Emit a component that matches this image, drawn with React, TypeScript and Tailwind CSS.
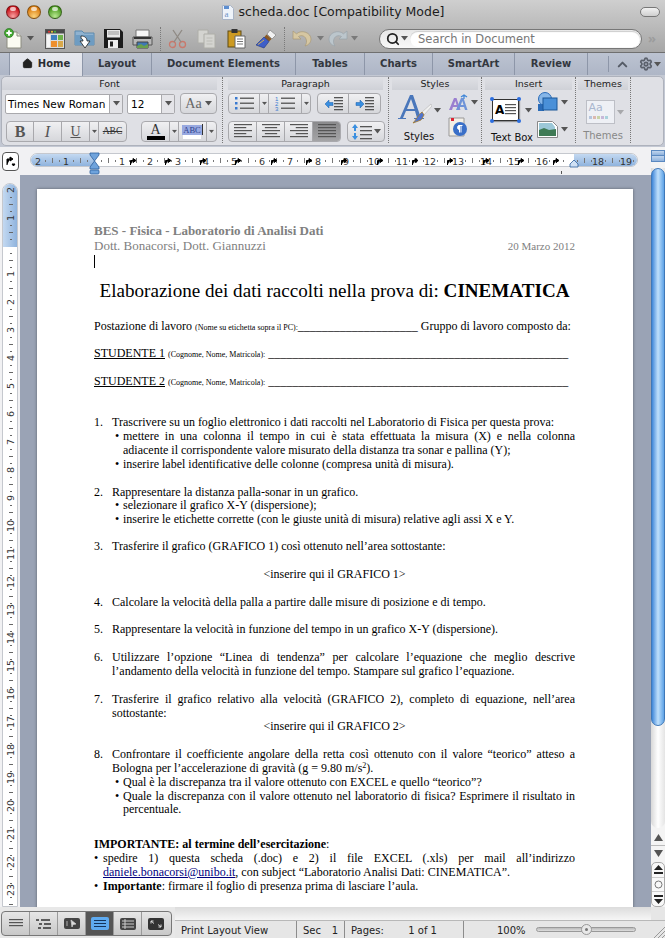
import React from "react";
import { ChevronUp, Home, Settings, Search } from "lucide-react";

const serif = "font-['Liberation_Serif','Times_New_Roman',serif]";
const ui = "font-['DejaVu_Sans','Noto_Sans',sans-serif]";

/* ---------- small shared drawings ---------- */

function Caret({ className = "" }: { className?: string }) {
  return (
    <svg width="7" height="5" viewBox="0 0 7 5" className={className}>
      <path d="M0 0h7L3.500 4.500z" fill="#555" />
    </svg>
  );
}

function TrafficLight({ from, to }: { from: string; to: string }) {
  return (
    <span
      className="relative block w-[14px] h-[14px] rounded-full border border-[#00000066]"
      style={{ background: `radial-gradient(circle at 50% 85%, ${to}, ${from} 70%)` }}
    >
      <span className="absolute left-[3px] top-[1px] w-[6px] h-[4px] rounded-full bg-white/70" />
    </span>
  );
}

function Lines({ rows, w = 18, indent = "left" }: { rows: number; w?: number; indent?: "left" | "center" | "right" | "full" }) {
  const out = [];
  for (let i = 0; i < rows; i++) {
    const short = i % 2 === 1;
    const lw = indent === "full" || !short ? w : w * 0.68;
    const x = indent === "center" ? (w - lw) / 2 : indent === "right" ? w - lw : 0;
    out.push(<rect key={i} x={x} y={i * 3} width={lw} height="1.200" fill="#555" />);
  }
  return (
    <svg width={w} height={rows * 3}>
      {out}
    </svg>
  );
}

/* ---------- toolbar icons ---------- */

const NewDoc = () => (
  <svg width="18" height="21" viewBox="0 0 18 21">
    <path d="M3 4h10l4 4v12H3z" fill="#fbfbf2" stroke="#8c8c80" />
    <path d="M13 4v4h4" fill="#e4e4d8" stroke="#8c8c80" />
    <circle cx="5" cy="5" r="4.500" fill="#45a832" stroke="#1d6b15" strokeWidth=".6" />
    <path d="M2.300 5h5.400M5 2.300v5.400" stroke="#fff" strokeWidth="1.900" />
  </svg>
);
const Gallery = () => (
  <svg width="20" height="20" viewBox="0 0 20 20">
    <rect x="0.500" y="0.500" width="19" height="19" fill="#dcdcdc" stroke="#555" />
    <rect x="1" y="1" width="18" height="3.500" fill="#4a4a4a" />
    <circle cx="4" cy="2.800" r="1" fill="#e33" />
    <circle cx="7" cy="2.800" r="1" fill="#ec3" />
    <circle cx="10" cy="2.800" r="1" fill="#4b4" />
    <rect x="2" y="6" width="3" height="12" fill="#f5f5f5" />
    <rect x="6" y="6" width="6" height="5" fill="#3f7fc0" />
    <rect x="13" y="6" width="5" height="5" fill="#6fb24a" />
    <rect x="6" y="12" width="6" height="6" fill="#ee8f2e" />
    <rect x="13" y="12" width="5" height="6" fill="#d9a84a" />
  </svg>
);
const OpenFolder = () => (
  <svg width="21" height="20" viewBox="0 0 21 20">
    <path d="M1 2h7l2 2h10v12H1z" fill="#8fb2d0" stroke="#5c8aae" />
    <path d="M1 6h19v10H1z" fill="#6e9cc2" />
    <path d="M7 7c4 0 6 2 6 5h3l-5 7-5-7h3c0-1.500-1-2.500-2-2.500z" fill="#fff" stroke="#222" strokeWidth=".8" />
  </svg>
);
const Save = () => (
  <svg width="19" height="19" viewBox="0 0 19 19">
    <path d="M0 0h16l3 3v16H0z" fill="#1c1c1c" />
    <rect x="3" y="1" width="13" height="7.500" fill="#e8e8e8" />
    <path d="M4 3h11M4 5h11" stroke="#999" />
    <rect x="4" y="11" width="10" height="8" fill="#eee" />
    <rect x="6" y="12.500" width="3" height="5" fill="#222" />
  </svg>
);
const Printer = () => (
  <svg width="21" height="20" viewBox="0 0 21 20">
    <path d="M4 1h13v7H4z" fill="#f6f6f6" stroke="#777" />
    <path d="M1 8h19v8H1z" fill="#b8b8b8" stroke="#555" />
    <path d="M2 8h17v2H2z" fill="#333" />
    <path d="M5 13h11v6H5z" fill="#3f78b5" stroke="#444" />
    <path d="M5 17l4-2 3 2 4-2v4H5z" fill="#6aa04d" />
  </svg>
);
const Cut = () => (
  <svg width="19" height="20" viewBox="0 0 19 20" fill="none" stroke="#8f8a84" strokeWidth="1.300">
    <circle cx="4.500" cy="15.500" r="3" stroke="#c9796c" />
    <circle cx="14.500" cy="15.500" r="3" stroke="#c9796c" />
    <path d="M6 13 14 1M13 13 5 1" />
  </svg>
);
const Copy = () => (
  <svg width="20" height="20" viewBox="0 0 20 20" fill="#d4d4d0" stroke="#aeaea8">
    <path d="M1 1h10v13H1z" />
    <path d="M7 5h11v14H7z" />
    <path d="M9.500 9h6M9.500 12h6M9.500 15h6" stroke="#bcbcb6" />
  </svg>
);
const Paste = () => (
  <svg width="19" height="21" viewBox="0 0 19 21">
    <rect x="1" y="3" width="13" height="16" fill="#cc9a22" stroke="#5f4a12" />
    <rect x="4.500" y="1" width="6" height="4" fill="#333" />
    <path d="M8 8h10v12H8z" fill="#fff" stroke="#666" />
    <path d="M10 11h6M10 13.500h6M10 16h6" stroke="#777" />
  </svg>
);
const Painter = () => (
  <svg width="21" height="20" viewBox="0 0 21 20">
    <path d="M14 1l6 5-4 4-5-5z" fill="#f2f2f2" stroke="#999" />
    <path d="M10.500 5.500l5 4.500-2.500 2.500-5-4z" fill="#8a5a24" />
    <path d="M8 8l5 4.500-5 6.500-8-3z" fill="#3f5fc8" stroke="#24367c" strokeWidth=".6" />
    <path d="M2 15.500 8 11" stroke="#d9b24a" />
  </svg>
);
const Undo = () => (
  <svg width="20" height="17" viewBox="0 0 20 17">
    <path d="M1 1v8h8L6.500 6.500C9 4.800 14 5.500 14.500 11c.1 2-.5 3.500-1.500 5 4-1 6-4 6-7C19 3 10-1 4.500 3.800z" fill="#d6c7a2" stroke="#a99a76" strokeWidth=".7" />
  </svg>
);
const Redo = () => (
  <svg width="20" height="17" viewBox="0 0 20 17">
    <path d="M19 1v8h-8l2.500-2.500C11 4.800 6 5.500 5.500 11c-.1 2 .5 3.500 1.500 5-4-1-6-4-6-7C1 3 10-1 15.500 3.800z" fill="#bcc6cc" stroke="#9aa4aa" strokeWidth=".7" />
  </svg>
);

const Dotted = () => <span className="h-[66px] shrink-0 border-l border-dotted border-[#777]" />;

/* ---------- title bar & toolbar ---------- */

function TitleBar() {
  return (
    <div className="h-[25px] flex items-center pl-[6px] pr-[6px] relative">
      <div className="flex gap-[7px] mt-[-2px]">
        <TrafficLight from="#c8141c" to="#f9a0a0" />
        <TrafficLight from="#dc7d10" to="#fbd27a" />
        <TrafficLight from="#4c9a20" to="#b8e890" />
      </div>
      <div className={`flex-1 flex justify-center items-center gap-[5px] ml-[-36px] ${ui} text-[12.500px] text-[#1c1c1c]`}>
        <svg width="12" height="15" viewBox="0 0 12 15">
          <path d="M.5.500h8l3 3v11H.500z" fill="#eef3fa" stroke="#a9b4c6" />
          <rect x="2" y="1" width="5" height="3" fill="#5d8ed0" />
          <text x="2.500" y="12" fontSize="9" fill="#6f92c6" fontFamily="Liberation Serif">a</text>
        </svg>
        <span>scheda.doc [Compatibility Mode]</span>
      </div>
      <span className="w-[20px] h-[10px] rounded-full border border-[#777] bg-gradient-to-b from-[#f2f2f2] to-[#cfcfcf] mt-[-2px] mr-[-1px]" />
    </div>
  );
}

function Toolbar() {
  return (
    <div className="h-[28px] flex items-center pl-[4px] border-b border-[#6f6f6f]">
      <NewDoc />
      <Caret className="ml-[5px] mr-[11px]" />
      <Gallery />
      <span className="w-[9px]" />
      <OpenFolder />
      <span className="w-[9px]" />
      <Save />
      <span className="w-[9px]" />
      <Printer />
      <span className="mx-[7px] h-[24px] border-l border-dotted border-[#7a7a7a]" />
      <Cut />
      <span className="w-[10px]" />
      <Copy />
      <span className="w-[10px]" />
      <Paste />
      <span className="w-[10px]" />
      <Painter />
      <span className="mx-[7px] h-[24px] border-l border-dotted border-[#7a7a7a]" />
      <Undo />
      <Caret className="ml-[5px] mr-[4px] opacity-60" />
      <Redo />
      <Caret className="ml-[3px] opacity-60" />
      <div className="ml-[21px] w-[263px] h-[20px] rounded-full bg-gradient-to-b from-[#e8e8e8] to-[#f8f8f8] border border-[#777] flex items-center pl-[6px] pr-[1px]">
        <Search size={14} strokeWidth={3} className="text-[#222]" />
        <Caret className="ml-[1px]" />
        <div className={`ml-[2px] flex-1 h-[16px] rounded-full bg-white shadow-[inset_0_1px_1px_#0003] pl-[8px] ${ui} text-[11.500px] leading-[16px] text-[#777]`}>
          Search in Document
        </div>
      </div>
      <span className="ml-[6px] text-[#9c9c9c] text-[13px] font-bold leading-none">»</span>
    </div>
  );
}

/* ---------- ribbon tabs ---------- */

function Tabs() {
  const tabs: [string, string][] = [
    ["Layout", "w-[69px]"],
    ["Document Elements", "w-[144px]"],
    ["Tables", "w-[69px]"],
    ["Charts", "w-[68px]"],
    ["SmartArt", "w-[82px]"],
    ["Review", "w-[73px]"],
  ];
  return (
    <div className={`h-[22px] flex bg-gradient-to-b from-[#bcc3d1] to-[#aeb6c6] ${ui} text-[10px] font-bold text-[#33373e]`}>
      <div className="w-[10px] border-r border-[#8d96a8]" />
      <div className="w-[73px] h-[23px] pb-[3px] flex items-center justify-center gap-[5px] bg-gradient-to-b from-[#e6e8ee] to-[#dddfe6] border-r border-[#8d96a8] text-[#2a2d33] relative z-10">
        <Home size={11} fill="#222" stroke="#222" />
        <span>Home</span>
      </div>
      {tabs.map(([label, w]) => (
        <div key={label} className={`${w} pb-[2px] flex items-center justify-center border-r border-[#8d96a8]`}>
          {label}
        </div>
      ))}
      <span className="ml-[20px] my-[3px] border-l border-[#8d96a8]" />
      <div className="flex items-center ml-[6px] gap-[9px]">
        <ChevronUp size={15} strokeWidth={3.200} className="text-[#555b66]" />
        <div className="flex items-center gap-[1px]">
          <Settings size={14} strokeWidth={3} className="text-[#5b616c]" />
          <Caret />
        </div>
      </div>
    </div>
  );
}

/* ---------- ribbon ---------- */

function Btn({ w, active = false, children, last = false }: { w: string; active?: boolean; children?: React.ReactNode; last?: boolean }) {
  return (
    <div
      className={`${w} h-full flex items-center justify-center ${last ? "" : "border-r border-[#a8a8ac]"} ${
        active ? "bg-gradient-to-b from-[#8a8a8c] to-[#a4a4a6]" : ""
      }`}
    >
      {children}
    </div>
  );
}

const segment = "flex items-center h-[21px] border border-[#a9a9ad] rounded-[4px] bg-gradient-to-b from-[#f0f0f2] to-[#d6d7db] overflow-hidden";

function GroupTitle({ label, w, className = "" }: { label: string; w: string; className?: string }) {
  return (
    <div className={`${w} h-[13px] text-center ${ui} text-[9.500px] leading-[14px] text-[#222] bg-gradient-to-b from-transparent to-[#cfd1d7] ${className}`}>
      {label}
    </div>
  );
}

function BulletList({ numbered = false }: { numbered?: boolean }) {
  return (
    <svg width="20" height="15" viewBox="0 0 20 15">
      {[1, 6, 11].map((y, i) =>
        numbered ? (
          <text key={y} x="0" y={y + 4} fontSize="6" fill="#3a7ad0" fontFamily="Liberation Sans">{i + 1}</text>
        ) : (
          <rect key={y} x="1" y={y} width="2.500" height="2.500" fill="#3a7ad0" />
        ),
      )}
      {[1.500, 6.500, 11.500].map((y) => (
        <rect key={y} x="6" y={y} width="14" height="1.500" fill="#666" />
      ))}
    </svg>
  );
}

function IndentIcon({ flip = false }: { flip?: boolean }) {
  return (
    <svg width="19" height="14" viewBox="0 0 19 14">
      {flip ? (
        <path d="M5 3 1 7l4 4V8.500h4v-3H5z" fill="#3a8fe0" stroke="#1b5faa" strokeWidth=".5" />
      ) : (
        <path d="M5 3l4 4-4 4V8.500H1v-3h4z" fill="#3a8fe0" stroke="#1b5faa" strokeWidth=".5" />
      )}
      {[0, 3, 6, 9, 12].map((y) => (
        <rect key={y} x="10" y={y} width="9" height="1.300" fill="#555" />
      ))}
    </svg>
  );
}

function FontGroup() {
  return (
    <div className="w-[220px] shrink-0 flex flex-col">
      <GroupTitle label="Font" w="w-[215px]" />
      <div className="w-full flex items-center mt-[3px] pl-[3px]">
        <div className={`w-[118px] h-[20px] flex border border-[#a9a9ad] rounded-[2px] bg-white ${ui}`}>
          <span className="flex-1 px-[2px] text-[10.500px] leading-[18px] text-black whitespace-nowrap overflow-hidden">Times New Roman</span>
          <span className="w-[13px] flex items-center justify-center border-l border-[#a9a9ad] bg-[#e4e4e8]"><Caret /></span>
        </div>
        <div className={`ml-[4px] w-[48px] h-[20px] flex border border-[#a9a9ad] rounded-[2px] bg-white ${ui}`}>
          <span className="flex-1 px-[3px] text-[10.500px] leading-[18px] text-black">12</span>
          <span className="w-[13px] flex items-center justify-center border-l border-[#a9a9ad] bg-[#e4e4e8]"><Caret /></span>
        </div>
        <div className={`${segment} ml-[5px] w-[37px] justify-center gap-[3px]`}>
          <span className={`${serif} text-[14px] leading-none text-[#666]`}>Aa</span>
          <Caret />
        </div>
      </div>
      <div className="w-full flex items-center mt-[7px] pl-[4px]">
        <div className={`${segment} w-[121px]`}>
          <Btn w="w-[27px]"><span className={`${serif} font-bold text-[16px] text-[#555]`}>B</span></Btn>
          <Btn w="w-[28px]"><span className={`${serif} italic text-[16px] text-[#555]`}>I</span></Btn>
          <Btn w="w-[28px]"><span className={`${serif} underline text-[14px] text-[#555]`}>U</span></Btn>
          <Btn w="w-[9px]"><Caret className="scale-75" /></Btn>
          <Btn w="flex-1" last><span className={`${serif} line-through text-[9.500px] text-[#333]`}>ABC</span></Btn>
        </div>
        <div className={`${segment} ml-[14px] w-[76px]`}>
          <Btn w="w-[28px]">
            <div className="flex flex-col items-center">
              <span className={`${serif} text-[14px] leading-[12px] text-[#333]`}>A</span>
              <span className="w-[18px] h-[4px] bg-black" />
            </div>
          </Btn>
          <Btn w="w-[9px]"><Caret className="scale-75" /></Btn>
          <Btn w="w-[28px]">
            <div className="flex flex-col items-center">
              <div className="flex items-center">
                <span className={`${serif} text-[8.500px] leading-[10px] px-[1px] bg-[#97a8e0] text-[#2e3f8c]`}>ABC</span>
                <span className="w-px h-[11px] bg-[#333]" />
              </div>
              <span className="w-[18px] h-[4px] bg-white" />
            </div>
          </Btn>
          <Btn w="flex-1" last><Caret className="scale-75" /></Btn>
        </div>
      </div>
    </div>
  );
}

function ParagraphGroup() {
  return (
    <div className="w-[165px] shrink-0 flex flex-col items-center">
      <GroupTitle label="Paragraph" w="w-[155px]" />
      <div className="w-full flex items-center mt-[3px] pl-[5px] gap-[6px]">
        <div className={`${segment} w-[83px]`}>
          <Btn w="w-[31px]"><BulletList /></Btn>
          <Btn w="w-[9px]"><Caret className="scale-75" /></Btn>
          <Btn w="w-[33px]"><BulletList numbered /></Btn>
          <Btn w="flex-1" last><Caret className="scale-75" /></Btn>
        </div>
        <div className={`${segment} w-[64px]`}>
          <Btn w="w-[31px]"><IndentIcon flip /></Btn>
          <Btn w="flex-1" last><IndentIcon /></Btn>
        </div>
      </div>
      <div className="w-full flex items-center mt-[7px] pl-[5px] gap-[6px]">
        <div className={`${segment} w-[113px]`}>
          <Btn w="w-[28px]"><Lines rows={5} indent="left" /></Btn>
          <Btn w="w-[28px]"><Lines rows={5} indent="center" /></Btn>
          <Btn w="w-[28px]"><Lines rows={5} indent="right" /></Btn>
          <Btn w="flex-1" active last><Lines rows={5} indent="full" /></Btn>
        </div>
        <div className={`${segment} w-[38px] justify-center gap-[2px]`}>
          <svg width="20" height="16" viewBox="0 0 20 16">
            <path d="M3 0l3 4H4v3H2V4H0zM3 16l3-4H4V9H2v3H0z" fill="#3a8fe0" />
            {[2, 6, 10, 14].map((y) => <rect key={y} x="8" y={y} width="12" height="1.300" fill="#555" />)}
          </svg>
          <Caret />
        </div>
      </div>
    </div>
  );
}

function StylesGroup() {
  return (
    <div className="w-[92px] shrink-0 flex flex-col items-center">
      <GroupTitle label="Styles" w="w-[86px]" />
      <div className="flex w-full pl-[6px] mt-[1px]">
        <div className="flex flex-col items-center w-[48px]">
          <div className="flex items-center h-[38px]">
            <svg width="34" height="32" viewBox="0 0 34 32">
              <path d="M12 1h3l8 23h3v1H16v-1h3l-2-7H8l-3 7h3v1H0v-1h2z M9 15h7.500L13 5z" fill="#4a77bb" fillRule="evenodd" />
              <path d="M33 10l-9 8 2 3 8-9z" fill="#f0f0f0" stroke="#aaa" strokeWidth=".5" />
              <path d="M24 18l2 3-3 5-8 3c3-3 5-8 9-11z" fill="#4e74d0" stroke="#a47a2c" strokeWidth=".8" />
            </svg>
            <Caret className="ml-[2px]" />
          </div>
          <span className={`${ui} text-[10px] leading-[12px] text-[#111] mt-[2px]`}>Styles</span>
        </div>
        <div className="flex flex-col gap-[6px] ml-[5px] mt-[3px]">
          <div className="flex items-center gap-[2px]">
            <svg width="21" height="17" viewBox="0 0 21 17">
              <path d="M1 16 6 4h2.500l4 12h-2.500l-1-3H5l-1 3zM5.800 11h2.800L7.300 7z" fill="#9a7fd0" fillRule="evenodd" />
              <path d="M8 16 13 4h2.500l4 12H17l-1-3h-4l-1 3zM12.800 11h2.800l-1.300-4z" fill="#6f93d8" fillRule="evenodd" />
              <path d="M13 3l3-2 3 2M16 1v4" stroke="#3f86d8" strokeWidth="1.200" fill="none" />
            </svg>
            <Caret />
          </div>
          <svg width="20" height="20" viewBox="0 0 20 20">
            <path d="M1 1h15v18H1z" fill="#f3efe6" stroke="#999" />
            <rect x="3" y="1" width="3" height="3" fill="#d23" />
            <circle cx="12" cy="12" r="7" fill="#3a6fc8" />
            <path d="M10.500 8.500h4M13 8.500v7M11.500 8.500v7M11.500 8.500a2 2 0 0 0 0 4" stroke="#fff" fill="#fff" strokeWidth="1" />
          </svg>
        </div>
      </div>
    </div>
  );
}

function InsertGroup() {
  return (
    <div className="w-[93px] shrink-0 flex flex-col items-center">
      <GroupTitle label="Insert" w="w-[87px]" />
      <div className="flex w-full pl-[7px] mt-[1px]">
        <div className="flex flex-col items-center w-[46px]">
          <div className="flex items-center h-[38px]">
            <div className="relative w-[27px] h-[22px] bg-white border border-[#333] shadow-[1px_1px_1px_#0005] flex items-center pl-[2px] gap-[1px]">
              <span className={`${ui} text-[12px] font-bold leading-none text-black`}>A</span>
              <Lines rows={4} w={11} indent="full" />
              {/* selection handles of the text box */}
              <span className="absolute left-[-3px] top-[-3px] w-[4px] h-[4px] rounded-full bg-[#2b6de0]" />
              <span className="absolute right-[-3px] top-[-3px] w-[4px] h-[4px] rounded-full bg-[#2b6de0]" />
              <span className="absolute left-[-3px] bottom-[-3px] w-[4px] h-[4px] rounded-full bg-[#2b6de0]" />
              <span className="absolute right-[-3px] bottom-[-3px] w-[4px] h-[4px] rounded-full bg-[#2b6de0]" />
            </div>
            <Caret className="ml-[6px]" />
          </div>
          <span className={`${ui} text-[10px] leading-[12px] text-[#111] whitespace-nowrap mt-[3px]`}>Text Box</span>
        </div>
        <div className="flex flex-col gap-[9px] ml-[2px] mt-[1px]">
          <div className="flex items-center gap-[3px]">
            <svg width="21" height="20" viewBox="0 0 21 20">
              <circle cx="8" cy="7" r="6.500" fill="#86b6e8" stroke="#2b6cb8" />
              <rect x="1" y="12" width="6" height="7" fill="#2b6cb8" />
              <rect x="6" y="6" width="14" height="12" fill="#4a90d8" stroke="#1b5698" />
            </svg>
            <Caret />
          </div>
          <div className="flex items-center gap-[3px]">
            <svg width="21" height="17" viewBox="0 0 21 17">
              <path d="M.5.500h15l5 5v11H.500z" fill="#fff" stroke="#888" />
              <path d="M2 2h13l3 4v3H2z" fill="#9cc8d8" />
              <path d="M2 9l5-2 5 2 7-1v7H2z" fill="#3f7a55" />
            </svg>
            <Caret />
          </div>
        </div>
      </div>
    </div>
  );
}

function ThemesGroup() {
  return (
    <div className="w-[54px] shrink-0 flex flex-col items-center">
      <GroupTitle label="Themes" w="w-[50px]" />
      <div className="flex flex-col items-center mt-[3px]">
        <div className="flex items-center gap-[2px] h-[32px] mt-[3px] ml-[3px]">
          <div className={`w-[29px] h-[24px] bg-[#eef0f5] border border-[#bdbfc6] ${ui} text-[11px] leading-[14px] text-[#a9b7cf] pl-[2px]`}>
            Aa
            <div className="flex gap-[1px] mt-[1px]">
              <span className="w-[3px] h-[3px] bg-[#b7c6de]" />
              <span className="w-[3px] h-[3px] bg-[#dcb9b0]" />
              <span className="w-[3px] h-[3px] bg-[#c9d4a8]" />
              <span className="w-[3px] h-[3px] bg-[#c7b8d8]" />
              <span className="w-[3px] h-[3px] bg-[#a9d2dc]" />
            </div>
          </div>
          <Caret className="opacity-40" />
        </div>
        <span className={`${ui} text-[10px] leading-[12px] text-[#888] mt-[2px]`}>Themes</span>
      </div>
    </div>
  );
}

function Ribbon() {
  return (
    <div className="h-[72px] bg-[#c3c8d3] px-[1px] pt-[1px] pb-[1px]">
      <div className="h-full flex rounded-[5px] border border-[#aeb2bc] bg-[#dfe0e5] overflow-hidden">
        <FontGroup />
        <Dotted />
        <ParagraphGroup />
        <Dotted />
        <StylesGroup />
        <Dotted />
        <InsertGroup />
        <Dotted />
        <ThemesGroup />
        <Dotted />
      </div>
    </div>
  );
}

/* ---------- rulers ---------- */

function HorizontalRuler() {
  const ticks: React.ReactNode[] = [];
  const inch = 28;
  const zero = 63;
  const labelled = [-2, -1, 1, 2, 3, 4, 5, 6, 7, 8, 9, 10, 11, 12, 13, 14, 15, 16, 18, 19];
  labelled.forEach((n) => {
    ticks.push(
      <text key={n} x={zero + n * inch} y="12.500" textAnchor="middle" fontSize="9.500" fill="#333" fontFamily="DejaVu Sans">
        {Math.abs(n)}
      </text>,
    );
  });
  for (let n = -2; n < 20; n++) {
    for (const f of [0.25, 0.5, 0.75]) {
      const x = zero + (n + f) * inch;
      ticks.push(<rect key={`${n}-${f}`} x={x} y={f === 0.5 ? 6 : 8} width="1" height={f === 0.5 ? 5 : 2} fill="#777" />);
    }
  }
  // tab stops set on the document
  for (let i = 0; i < 13; i++) {
    const x = Math.round(98.500 + i * 35.330);
    ticks.push(<path key={`t${i}`} d={`M${x + 0.500} 13V8.500H${x + 3}M${x + 3} 6.500l3 2-3 2z`} stroke="#000" fill="#000" strokeWidth="1" />);
  }
  return (
    <div className="h-[28px] bg-[#f1f1f3] flex items-start pt-[6px] pl-[2px]">
      <div className="w-[17px] h-[19px] rounded-[4px] border border-[#555] bg-white flex items-center justify-center mt-[-1px] shadow-[0_0_2px_#fff]">
        <svg width="11" height="11" viewBox="0 0 11 11">
          <path d="M2 9V3h3M5 1l3 2-3 2zM7 8h3L8.500 10z" stroke="#000" fill="#000" />
        </svg>
      </div>
      <div className="ml-[11px] w-[608px] h-[14px] rounded-full bg-white border border-[#c5c8ce] relative">
        <span className="absolute left-0 top-0 bottom-0 w-[63px] rounded-l-full bg-gradient-to-b from-[#c4d9f1] to-[#8fb3dd]" />
        <span className="absolute right-0 top-0 bottom-0 w-[63px] rounded-r-full bg-gradient-to-b from-[#c4d9f1] to-[#8fb3dd]" />
        <svg width="608" height="18" className="absolute left-0 top-[-2px]">
          {ticks}
        </svg>
        {/* indent markers */}
        <svg width="11" height="23" viewBox="0 0 11 23" className="absolute left-[58px] top-[-2px]">
          <path d="M1 1h9v2L5.500 9 1 3z" fill="#6fa3dc" stroke="#2f5f9c" strokeWidth=".8" />
          <path d="M5.500 9 10 15v2H1v-2z" fill="#6fa3dc" stroke="#2f5f9c" strokeWidth=".8" />
          <rect x="1" y="18" width="9" height="4" rx="1" fill="#6fa3dc" stroke="#2f5f9c" strokeWidth=".8" />
        </svg>
        <svg width="10" height="9" viewBox="0 0 10 9" className="absolute right-[58px] top-[5px]">
          <path d="M5 1l4 4v3H1V5z" fill="#cfe0f4" stroke="#2f5f9c" strokeWidth=".8" />
        </svg>
        <span className="absolute left-[530px] top-[17px] w-px h-[3px] bg-[#555]" />
      </div>
    </div>
  );
}

function VerticalRuler() {
  const step = 28;
  const nums = [2, 1, 0, 1, 2, 3, 4, 5, 6, 7, 8, 9, 10, 11, 12, 13, 14, 15, 16, 17, 18, 19, 20, 21, 22, 23];
  return (
    <div className="w-[20px] shrink-0 bg-[#f1f1f3] pl-[2px] pt-[8px] pr-[1px]">
      <div className="relative h-[724px] w-[16px] rounded-t-full bg-white border border-[#c5c8ce] overflow-hidden">
        <span className="absolute left-0 right-0 top-0 h-[63px] bg-gradient-to-r from-[#c4d9f1] to-[#8fb3dd]" />
        <svg width="16" height="724" className="absolute left-0 top-0">
          {nums.map((n, i) =>
            n === 0 ? null : (
              <text key={i} x="0" y="0" fontSize="9.500" fill="#333" fontFamily="DejaVu Sans" textAnchor="middle"
                transform={`translate(11 ${6 + i * step}) rotate(-90)`}>
                {n}
              </text>
            ),
          )}
          {Array.from({ length: 104 }).map((_, i) =>
            i % 4 === 0 ? null : (
              <rect key={i} x={i % 2 ? 7 : 6} y={6 + (i * step) / 4} width={i % 2 ? 2 : 4} height="1" fill="#666" />
            ),
          )}
        </svg>
      </div>
    </div>
  );
}

/* ---------- document body ---------- */

function JLine({ children, className = "" }: { children: React.ReactNode; className?: string }) {
  return <div className={`text-justify [text-align-last:justify] whitespace-nowrap ${className}`}>{children}</div>;
}

function Item({ n, className = "", children }: { n: number; className?: string; children: React.ReactNode }) {
  return (
    <div className={`flex ${className}`}>
      <span className="w-[18px] shrink-0">{n}.</span>
      <div className="flex-1 min-w-0">{children}</div>
    </div>
  );
}

function Bullet({ children, className = "" }: { children: React.ReactNode; className?: string }) {
  return (
    <div className={`flex ${className}`}>
      <span className="w-[11px] shrink-0 pl-[3px]">•</span>
      <div className="flex-1 min-w-0">{children}</div>
    </div>
  );
}

function Page() {
  return (
    <div className={`w-[596px] h-[760px] bg-white shadow-[0_0_3px_#0006] pl-[57px] pr-[58px] pt-[34px] ${serif} text-[12px] leading-[13.800px] text-black`}>
      <div className="font-bold text-[13px] leading-[15px] text-[#808080]">BES - Fisica - Laboratorio di Analisi Dati</div>
      <div className="flex justify-between items-baseline text-[13px] leading-[15px] text-[#808080]">
        <span>Dott. Bonacorsi, Dott. Giannuzzi</span>
        <span className="text-[11px]">20 Marzo 2012</span>
      </div>
      <div className="w-px h-[13px] bg-black mt-[1px]" />
      <div className="text-center text-[19.100px] leading-[22px] mt-[12px] whitespace-nowrap">
        Elaborazione dei dati raccolti nella prova di: <b>CINEMATICA</b>
      </div>

      <div className="mt-[18px] whitespace-nowrap">
        Postazione di lavoro <span className="text-[8px]">(Nome su etichetta sopra il PC):</span>____________________ Gruppo di lavoro composto da:
      </div>
      <div className="mt-[12px] whitespace-nowrap">
        <u>STUDENTE 1</u> <span className="text-[8px]">(Cognome, Nome, Matricola):</span> __________________________________________________
      </div>
      <div className="mt-[13px] whitespace-nowrap">
        <u>STUDENTE 2</u> <span className="text-[8px]">(Cognome, Nome, Matricola):</span> __________________________________________________
      </div>

      <Item n={1} className="mt-[27px]">
        <div className="whitespace-nowrap">Trascrivere su un foglio elettronico i dati raccolti nel Laboratorio di Fisica per questa prova:</div>
        <Bullet>
          <JLine>mettere in una colonna il tempo in cui è stata effettuata la misura (X) e nella colonna</JLine>
          <div className="whitespace-nowrap">adiacente il corrispondente valore misurato della distanza tra sonar e pallina (Y);</div>
        </Bullet>
        <Bullet>inserire label identificative delle colonne (compresa unità di misura).</Bullet>
      </Item>

      <Item n={2} className="mt-[14px]">
        <div>Rappresentare la distanza palla-sonar in un grafico.</div>
        <Bullet>selezionare il grafico X-Y (dispersione);</Bullet>
        <Bullet>inserire le etichette corrette (con le giuste unità di misura) relative agli assi X e Y.</Bullet>
      </Item>

      <Item n={3} className="mt-[13.500px]">Trasferire il grafico (GRAFICO 1) così ottenuto nell’area sottostante:</Item>
      <div className="mt-[14px] text-center">&lt;inserire qui il GRAFICO 1&gt;</div>

      <Item n={4} className="mt-[14px]">Calcolare la velocità della palla a partire dalle misure di posizione e di tempo.</Item>
      <Item n={5} className="mt-[13.500px]">Rappresentare la velocità in funzione del tempo in un grafico X-Y (dispersione).</Item>
      <Item n={6} className="mt-[14px]">
        <JLine>Utilizzare l’opzione “Linea di tendenza” per calcolare l’equazione che meglio descrive</JLine>
        <div>l’andamento della velocità in funzione del tempo. Stampare sul grafico l’equazione.</div>
      </Item>
      <Item n={7} className="mt-[14px]">
        <JLine>Trasferire il grafico relativo alla velocità (GRAFICO 2), completo di equazione, nell’area</JLine>
        <div>sottostante:</div>
      </Item>
      <div className="text-center">&lt;inserire qui il GRAFICO 2&gt;</div>
      <Item n={8} className="mt-[14px]">
        <JLine>Confrontare il coefficiente angolare della retta così ottenuto con il valore “teorico” atteso a</JLine>
        <div>
          Bologna per l’accelerazione di gravità (g = 9.80 m/s<sup className="text-[8px] leading-none">2</sup>).
        </div>
        <Bullet>Qual è la discrepanza tra il valore ottenuto con EXCEL e quello “teorico”?</Bullet>
        <Bullet>
          <JLine>Quale la discrepanza con il valore ottenuto nel laboratorio di fisica? Esprimere il risultato in</JLine>
          <div>percentuale.</div>
        </Bullet>
      </Item>

      <div className="mt-[21px]">
        <b>IMPORTANTE: al termine dell’esercitazione</b>:
      </div>
      <div className="flex">
        <span className="w-[9px] shrink-0">•</span>
        <div className="flex-1 min-w-0">
          <JLine>spedire 1) questa scheda (.doc) e 2) il file EXCEL (.xls) per mail all’indirizzo</JLine>
          <div className="whitespace-nowrap">
            <span className="text-[#000080] underline">daniele.bonacorsi@unibo.it</span>, con subject “Laboratorio Analisi Dati: CINEMATICA”.
          </div>
        </div>
      </div>
      <div className="flex">
        <span className="w-[9px] shrink-0">•</span>
        <div>
          <b>Importante</b>: firmare il foglio di presenza prima di lasciare l’aula.
        </div>
      </div>
    </div>
  );
}

function Scrollbar() {
  const glyph = "h-[16px] flex items-center justify-center";
  return (
    <div className="w-[14px] shrink-0 bg-[#f4f4f4] flex flex-col">
      {/* split box */}
      <div className="mt-[3px] h-[6px] bg-gradient-to-b from-[#c2d6ee] to-[#8fb2dc] border border-[#5b89c0]" />
      <div className="h-[6px] bg-gradient-to-b from-[#c2d6ee] to-[#8fb2dc] border border-[#5b89c0] border-t-0" />
      {/* track with its thumb */}
      <div className="mt-[6px] h-[660px] rounded-b-full bg-gradient-to-r from-[#d8d8d8] via-white to-[#e4e4e4] shrink-0">
        <div className="h-[558px] rounded-full border border-[#3f78b8] bg-gradient-to-r from-[#3d86d8] via-[#bfe0fb] to-[#5da2e6]" />
      </div>
      <div className="mt-[1px] flex flex-col items-center text-[#555]">
        <span className={glyph}>
          <svg width="9" height="7"><path d="M4.500 0 9 7H0z" fill="#555" /></svg>
        </span>
        <span className={`${glyph} w-full border-t border-[#bbb]`}>
          <svg width="9" height="7"><path d="M4.500 7 9 0H0z" fill="#555" /></svg>
        </span>
      </div>
      <div className="mt-[1px] rounded-[5px] border border-[#aaa] bg-[#f8f8f8] flex-1 flex flex-col">
        <span className="flex-1 flex items-center justify-center">
          <svg width="9" height="10"><path d="M4.500 0 9 5H0zM0 7h9v2H0z" fill="#222" /></svg>
        </span>
        <span className="flex-1 flex items-center justify-center border-y border-[#ccc]">
          <svg width="9" height="9"><circle cx="4.500" cy="4.500" r="3.500" fill="none" stroke="#777" /></svg>
        </span>
        <span className="flex-1 flex items-center justify-center">
          <svg width="9" height="10"><path d="M4.500 10 9 5H0zM0 1h9v2H0z" fill="#222" /></svg>
        </span>
      </div>
    </div>
  );
}

/* ---------- status bar ---------- */

function ViewButton({ active = false, children }: { active?: boolean; children: React.ReactNode }) {
  return (
    <div className={`w-[28px] h-full flex items-center justify-center border-r border-[#9a9a9a] last:border-r-0 ${active ? "bg-[#555]" : ""}`}>
      {children}
    </div>
  );
}

function StatusBar() {
  const Cell = ({ w, children }: { w: string; children: React.ReactNode }) => (
    <div className={`${w} h-full flex items-center border-r border-[#8c8c8c] px-[6px] pt-[2px] whitespace-nowrap`}>{children}</div>
  );
  return (
    <div className="h-[31px] flex bg-[#dedede]">
      <div className="w-[175px] shrink-0 pt-[4px] pl-[1px] bg-[#e8e8e8]">
        <div className="w-[171px] h-[25px] flex items-stretch rounded-[4px] border border-[#777] bg-gradient-to-b from-[#e6e6e6] to-[#c8c8c8] overflow-hidden">
          <ViewButton>
            <Lines rows={3} w={14} indent="full" />
          </ViewButton>
          <ViewButton>
            <svg width="16" height="10" viewBox="0 0 16 10">
              <path d="M0 1h3M5 1h9M3 5h3M8 5h7M2 9h3M7 9h8" stroke="#333" strokeWidth="1.500" />
            </svg>
          </ViewButton>
          <ViewButton>
            <svg width="16" height="11" viewBox="0 0 16 11">
              <rect width="16" height="11" rx="2" fill="#444" />
              <path d="M3 3v5M7 2l5 4-3 .5-1 2.500z" stroke="#ccc" fill="#ddd" strokeWidth=".8" />
            </svg>
          </ViewButton>
          <ViewButton active>
            <svg width="18" height="13" viewBox="0 0 18 13">
              <rect width="18" height="13" rx="2" fill="#5eaaf0" />
              <path d="M3 3.500h12M3 6.500h12M3 9.500h12" stroke="#13345c" strokeWidth="1.200" />
            </svg>
          </ViewButton>
          <ViewButton>
            <svg width="16" height="12" viewBox="0 0 16 12">
              <rect width="16" height="12" rx="2" fill="#444" />
              <path d="M2 3h12M2 6h12M2 9h12M5 1v10" stroke="#ccc" />
            </svg>
          </ViewButton>
          <ViewButton>
            <svg width="16" height="12" viewBox="0 0 16 12">
              <rect width="16" height="12" rx="2" fill="#333" />
              <path d="M3 3l3 2.500M3 3h2.500M3 3v2.500M13 9l-3-2.500M13 9h-2.500M13 9V6.500" stroke="#ddd" />
            </svg>
          </ViewButton>
        </div>
      </div>
      <div className={`flex-1 flex flex-col ${ui} text-[10px] text-[#222]`}>
        <div className="h-[15px] flex">
          <div className="w-[476px] bg-gradient-to-b from-[#dcdcdc] to-[#f6f6f6]" />
          <div className="flex-1 bg-[#e6e6e6]" />
        </div>
        <div className="flex-1 flex items-center bg-[#e6e6e6] border-t border-[#b8b8b8]">
          <Cell w="w-[122px]">Print Layout View</Cell>
          <Cell w="w-[48px]">
            <span className="flex-1">Sec</span>
            <span>1</span>
          </Cell>
          <Cell w="w-[119px]">
            <span className="flex-1">Pages:</span>
            <span className="mr-[20px]">1 of 1</span>
          </Cell>
          <span className="ml-[33px] w-[27px] pt-[2px]">100%</span>
          <div className="ml-[12px] w-[100px] h-[5px] rounded-full bg-gradient-to-b from-[#bbb] to-[#ddd] border border-[#999] flex items-center justify-center">
            <span className="w-[11px] h-[11px] rounded-full bg-[#e8e8e8] border border-[#999] flex items-center justify-center">
              <span className="w-[3px] h-[3px] rounded-full bg-[#777]" />
            </span>
          </div>
          <svg width="11" height="11" viewBox="0 0 11 11" className="ml-auto self-end">
            <path d="M0 11 11 0M4 11l7-7M8 11l3-3" stroke="#999" />
          </svg>
        </div>
      </div>
    </div>
  );
}

/* ---------- window ---------- */

export default function App() {
  return (
    <div className="w-[665px] h-[938px] overflow-hidden flex flex-col bg-[#e8e8e8]">
      <div className="bg-gradient-to-b from-[#cfcfcf] to-[#a6a6a6] shrink-0">
        <TitleBar />
        <Toolbar />
      </div>
      <Tabs />
      <Ribbon />
      <div className="flex-1 min-h-0 flex">
        <div className="flex-1 min-w-0 flex flex-col">
          <HorizontalRuler />
          <div className="flex-1 min-h-0 flex">
            <VerticalRuler />
            <div className="flex-1 min-w-0 bg-[#9aa3b5] pl-[17px] pt-[14px] overflow-hidden">
              <Page />
            </div>
          </div>
        </div>
        <Scrollbar />
      </div>
      <StatusBar />
    </div>
  );
}
